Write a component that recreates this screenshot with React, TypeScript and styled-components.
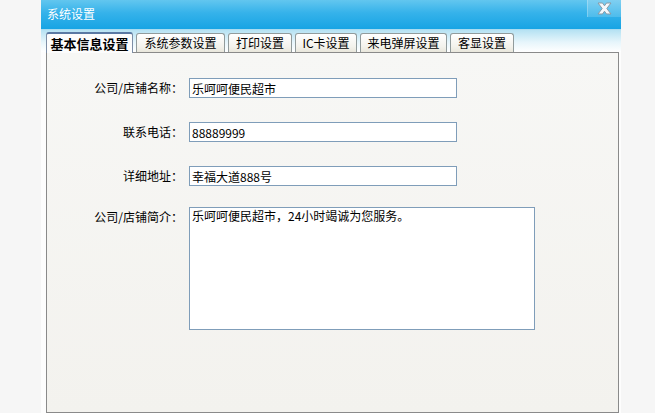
import { FC } from "react";
import styled, { createGlobalStyle, css } from "styled-components";

const tabs = [
  { label: "基本信息设置", width: 87 },
  { label: "系统参数设置", width: 89 },
  { label: "打印设置", width: 64 },
  { label: "IC卡设置", width: 62 },
  { label: "来电弹屏设置", width: 87 },
  { label: "客显设置", width: 64 },
];

const GlobalStyle = createGlobalStyle`
  html, body {
    margin: 0;
    padding: 0;
    background: #f6f6f6;
    font-family: "Noto Sans CJK SC", "Liberation Sans", sans-serif;
    font-size: 12px;
    color: #000;
  }

  * {
    box-sizing: border-box;
  }
`;

const CloseIcon: FC = () => (
  <svg width="15" height="13" viewBox="0 0 15 13">
    <path
      d="M1 1 H5.5 L7.5 3.8 L9.5 1 H14 L9.8 6.5 L14 12 H9.5 L7.5 9.2 L5.5 12 H1 L5.2 6.5 Z"
      fill="#f4f8fb"
      stroke="#8a9aa6"
      strokeWidth="1"
      strokeLinejoin="round"
    />
  </svg>
);

const App: FC = () => {
  return (
    <>
      <GlobalStyle />
      <Window>
        <TitleBar>
          <Title>系统设置</Title>
          <CloseButton>
            <CloseIcon />
          </CloseButton>
        </TitleBar>

        <TabStrip>
          {tabs.map((tab, i) => (
            <Tab key={tab.label} $active={i === 0} $width={tab.width}>
              {tab.label}
            </Tab>
          ))}
        </TabStrip>

        <Panel>
          <Form>
            <Row $top={25}>
              <Label>公司/店铺名称：</Label>
              <Input defaultValue="乐呵呵便民超市" />
            </Row>
            <Row $top={24}>
              <Label>联系电话：</Label>
              <Input defaultValue="88889999" />
            </Row>
            <Row $top={24}>
              <Label>详细地址：</Label>
              <Input defaultValue="幸福大道888号" />
            </Row>
            <Row $top={21} $alignTop>
              <Label>公司/店铺简介：</Label>
              <TextArea defaultValue="乐呵呵便民超市，24小时竭诚为您服务。" />
            </Row>
          </Form>
        </Panel>
      </Window>
    </>
  );
};

const Window = styled.div`
  margin-left: 41px;
  width: 580px;
  height: 413px;
  display: flex;
  flex-direction: column;
  overflow: hidden;
  background: #fdfdfd;
`;

const TitleBar = styled.div`
  height: 29px;
  flex-shrink: 0;
  display: flex;
  align-items: flex-start;
  justify-content: space-between;
  background: linear-gradient(to bottom, #62c6ef 0%, #35b2ea 45%, #17a4e4 100%);
`;

const Title = styled.div`
  padding: 6px 0 0 6px;
  color: #ffffff;
  font-size: 12px;
  line-height: 16px;
`;

const CloseButton = styled.div`
  width: 34px;
  height: 17px;
  display: flex;
  align-items: center;
  justify-content: center;
  border-left: 1px solid rgba(255, 255, 255, 0.25);
  background: linear-gradient(to bottom, #7fcff1 0%, #4dbcec 100%);
`;

const TabStrip = styled.div`
  height: 23px;
  flex-shrink: 0;
  display: flex;
  align-items: flex-end;
  gap: 3px;
  padding-left: 5px;
  border-top: 1px solid #a9dcf1;
  background: linear-gradient(to bottom, #b5e2f3 0%, #e6f5fb 55%, #ffffff 100%);
`;

const Tab = styled.div<{ $active: boolean; $width: number }>`
  width: ${(props) => props.$width}px;
  height: 19px;
  display: flex;
  align-items: center;
  justify-content: center;
  border: 1px solid #919b9c;
  border-bottom: none;
  border-radius: 3px 3px 0 0;
  background: linear-gradient(to bottom, #ffffff 0%, #f3f2ec 70%, #e9e7dc 100%);
  font-size: 12px;
  line-height: 14px;
  white-space: nowrap;

  ${(props) =>
    props.$active &&
    css`
      height: 21px;
      margin-bottom: -1px;
      position: relative;
      border-color: #7d8ea6;
      border-top: 2px solid #5a79a3;
      background: #fcfcfc;
      font-size: 13px;
      font-weight: bold;
    `}
`;

const Panel = styled.div`
  flex: 1;
  margin: 0 2px 0 5px;
  border: 1px solid #8a8a8a;
  background: linear-gradient(to bottom, #f7f7f5 0%, #f3f2ee 100%);
`;

const Form = styled.div`
  display: flex;
  flex-direction: column;
`;

const Row = styled.div<{ $top: number; $alignTop?: boolean }>`
  display: flex;
  align-items: ${(props) => (props.$alignTop ? "flex-start" : "center")};
  gap: 6px;
  margin-top: ${(props) => props.$top}px;
`;

const Label = styled.label`
  width: 136px;
  text-align: right;
  font-size: 12px;
  line-height: 20px;
  white-space: nowrap;
`;

const fieldStyle = css`
  border: 1px solid #7f9db9;
  background: #ffffff;
  font-family: "Noto Sans CJK SC", "Liberation Sans", sans-serif;
  font-size: 12px;
  color: #000;
  outline: none;
  padding: 0 2px;
  margin: 0;
`;

const Input = styled.input`
  ${fieldStyle}
  width: 268px;
  height: 20px;
`;

const TextArea = styled.textarea`
  ${fieldStyle}
  width: 346px;
  height: 123px;
  padding-top: 0;
  line-height: 16px;
  resize: none;
`;

export default App;
